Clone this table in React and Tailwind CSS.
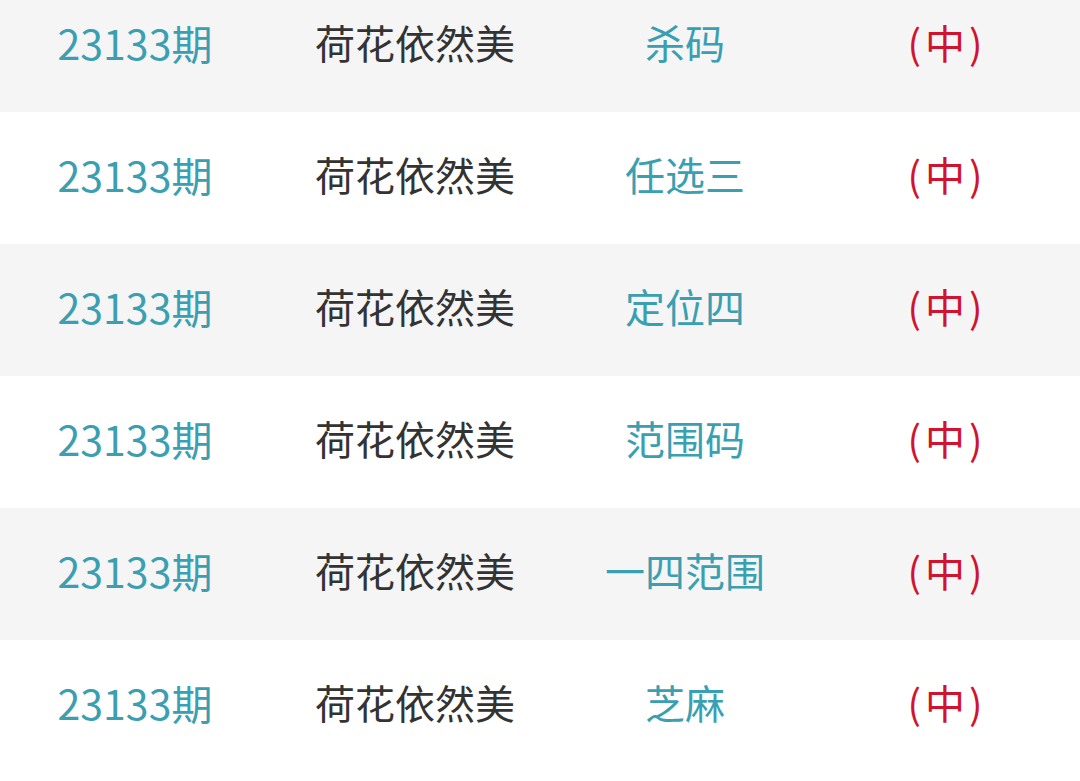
import React from "react";

const rows = ["杀码", "任选三", "定位四", "范围码", "一四范围", "芝麻"];

export default function App() {
  return (
    <div
      className="w-[1080px] h-[781px] overflow-hidden bg-white"
      style={{ fontFamily: '"Noto Sans CJK SC", "Noto Sans", sans-serif' }}
    >
      <div className="-mt-[20px] flex flex-col">
        {rows.map((r, i) => (
          <div
            key={i}
            className={`grid grid-cols-[270px_290px_250px_270px] h-[132px] pb-[8px] items-center text-[40px] leading-none ${
              i % 2 === 0 ? "bg-[#f5f5f6]" : "bg-white"
            }`}
          >
            <div className="text-center text-[41px] text-[#3a9fb1]">23133期</div>
            <div className="text-center text-[#333333]">荷花依然美</div>
            <div className="text-center text-[#3a9fb1]">{r}</div>
            <div className="text-center text-[#d0132e]">
              (<span className="mx-[4px]">中</span>)
            </div>
          </div>
        ))}
      </div>
    </div>
  );
}
